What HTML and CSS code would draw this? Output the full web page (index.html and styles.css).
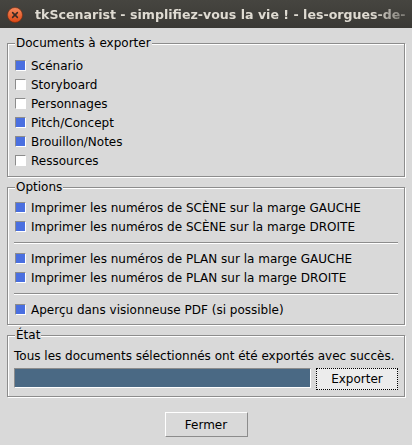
FILE: index.html
```html
<!DOCTYPE html>
<html lang="fr">
<head>
<meta charset="utf-8">
<title>tkScenarist</title>
<link rel="stylesheet" href="styles.css">
</head>
<body>
<header class="titlebar">
  <svg class="close" width="16" height="16" viewBox="0 0 16 16" aria-hidden="true">
    <defs>
      <linearGradient id="cg" x1="0" y1="0" x2="0" y2="1">
        <stop offset="0" stop-color="#f58a5e"/>
        <stop offset="1" stop-color="#dd4814"/>
      </linearGradient>
    </defs>
    <circle cx="8" cy="8" r="7.5" fill="url(#cg)" stroke="#7a2a0e" stroke-width="0.6"/>
    <path d="M5.6 5.6 L10.4 10.4 M10.4 5.6 L5.6 10.4" stroke="#3a2a24" stroke-width="1.5" stroke-linecap="round"/>
  </svg>
  <span class="title">tkScenarist - simplifiez-vous la vie ! - les-orgues-de-</span>
</header>
<main class="dialog">
  <fieldset class="group docs">
    <legend>Documents à exporter</legend>
    <label class="check"><span class="box on"></span>Scénario</label>
    <label class="check"><span class="box"></span>Storyboard</label>
    <label class="check"><span class="box"></span>Personnages</label>
    <label class="check"><span class="box on"></span>Pitch/Concept</label>
    <label class="check"><span class="box on"></span>Brouillon/Notes</label>
    <label class="check"><span class="box"></span>Ressources</label>
  </fieldset>
  <fieldset class="group options">
    <legend>Options</legend>
    <label class="check"><span class="box on"></span>Imprimer les numéros de SCÈNE sur la marge GAUCHE</label>
    <label class="check"><span class="box on"></span>Imprimer les numéros de SCÈNE sur la marge DROITE</label>
    <hr class="sep">
    <label class="check"><span class="box on"></span>Imprimer les numéros de PLAN sur la marge GAUCHE</label>
    <label class="check"><span class="box on"></span>Imprimer les numéros de PLAN sur la marge DROITE</label>
    <hr class="sep">
    <label class="check"><span class="box on"></span>Aperçu dans visionneuse PDF (si possible)</label>
  </fieldset>
  <fieldset class="group state">
    <legend>État</legend>
    <p class="status">Tous les documents sélectionnés ont été exportés avec succès.</p>
    <div class="export-row">
      <div class="progress"><div class="bar" style="width:100%"></div></div>
      <button class="btn btn-export" type="button">Exporter</button>
    </div>
  </fieldset>
  <div class="footer">
    <button class="btn btn-close" type="button">Fermer</button>
  </div>
</main>
</body>
</html>
```
FILE: styles.css
```css
* { box-sizing: border-box; }

html, body {
  margin: 0;
  padding: 0;
  background: #d9d9d9;
  font-family: "DejaVu Sans", "Liberation Sans", sans-serif;
  font-size: 12px;
  color: #000;
}

.titlebar {
  height: 28px;
  display: flex;
  align-items: center;
  background: linear-gradient(#464540, #3a3935);
  overflow: hidden;
}

.close {
  flex: none;
  margin-left: 7px;
  margin-top: 2px;
}

.title {
  margin-left: 12px;
  margin-top: 1px;
  flex: 1;
  min-width: 0;
  white-space: nowrap;
  font-family: "DejaVu Sans", sans-serif;
  font-weight: bold;
  font-size: 12.6px;
  color: #dfdbd2;
  -webkit-mask-image: linear-gradient(to right, #000 calc(100% - 40px), rgba(0,0,0,0.25));
  mask-image: linear-gradient(to right, #000 calc(100% - 40px), rgba(0,0,0,0.25));
}

.dialog {
  padding: 8px 7px 0;
}

.group {
  margin: 0;
  min-width: 0;
  padding: 0 6px;
  border: 1px solid #8c8c8c;
  box-shadow: inset 1px 1px 0 #fff, 1px 1px 0 #fff;
}

.group + .group { margin-top: 3px; }

.group legend {
  margin-left: 1px;
  padding: 0 1px;
  line-height: 15px;
  background: #d9d9d9;
}

.docs { padding-top: 5px; padding-bottom: 6px; }
.options { padding-top: 3px; padding-bottom: 5px; }
.state { padding-top: 4px; padding-bottom: 6px; }

.check {
  display: flex;
  align-items: center;
  height: 19px;
  white-space: nowrap;
}

.box {
  flex: none;
  width: 11px;
  height: 11px;
  margin-left: 1px;
  margin-right: 5px;
  background: #fff;
  border-top: 1px solid #8c8c8c;
  border-left: 1px solid #8c8c8c;
  border-right: 1px solid #fff;
  border-bottom: 1px solid #fff;
}

.box.on {
  background: #4a6fe0;
}

.sep {
  margin: 6px 0 5px;
  height: 0;
  border: 0;
  border-top: 1px solid #8c8c8c;
  border-bottom: 1px solid #fff;
}

.status {
  margin: 0;
  line-height: 19px;
  white-space: nowrap;
}

.export-row {
  margin-top: 2px;
  display: flex;
  align-items: flex-start;
  gap: 5px;
}

.progress {
  flex: 1;
  height: 20px;
  background: #c3c3c3;
  border-top: 1px solid #8c8c8c;
  border-left: 1px solid #8c8c8c;
  border-right: 1px solid #fff;
  border-bottom: 1px solid #fff;
}

.bar {
  height: 100%;
  background: #4a6984;
}

.btn {
  font-family: "DejaVu Sans", "Liberation Sans", sans-serif;
  font-size: 12px;
  color: #000;
  padding: 0;
  margin: 0;
  cursor: default;
}

.btn-export {
  flex: none;
  width: 82px;
  height: 22px;
  background: #ececec;
  border: 1px dotted #000;
}

.footer {
  margin-top: 15px;
  display: flex;
  justify-content: center;
}

.btn-close {
  width: 83px;
  height: 25px;
  background: #d9d9d9;
  border-top: 1px solid #fff;
  border-left: 1px solid #fff;
  border-right: 1px solid #8c8c8c;
  border-bottom: 1px solid #8c8c8c;
}
```
